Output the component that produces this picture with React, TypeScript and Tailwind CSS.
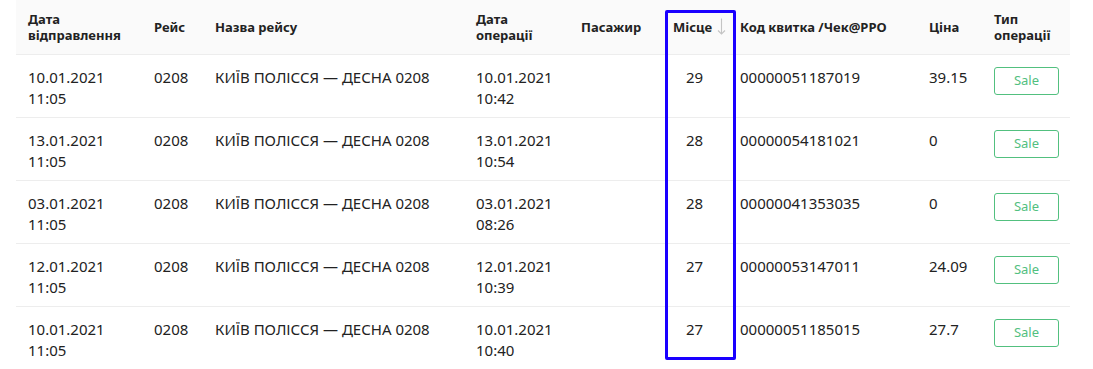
const rows = [
  { dep: ["10.01.2021", "11:05"], op: ["10.01.2021", "10:42"], seat: "29", code: "00000051187019", price: "39.15" },
  { dep: ["13.01.2021", "11:05"], op: ["13.01.2021", "10:54"], seat: "28", code: "00000054181021", price: "0" },
  { dep: ["03.01.2021", "11:05"], op: ["03.01.2021", "08:26"], seat: "28", code: "00000041353035", price: "0" },
  { dep: ["12.01.2021", "11:05"], op: ["12.01.2021", "10:39"], seat: "27", code: "00000053147011", price: "24.09" },
  { dep: ["10.01.2021", "11:05"], op: ["10.01.2021", "10:40"], seat: "27", code: "00000051185015", price: "27.7" },
];

export default function App() {
  return (
    <div className="relative bg-white w-[1093px] h-[369px] overflow-hidden font-['Noto_Sans',sans-serif] text-[15px] text-[#222]">
      <table className="ml-4 w-[1054px] table-fixed border-collapse">
        <colgroup>
          <col className="w-[126px]" />
          <col className="w-[61px]" />
          <col className="w-[261px]" />
          <col className="w-[105px]" />
          <col className="w-[92px]" />
          <col className="w-[67px]" />
          <col className="w-[189px]" />
          <col className="w-[65px]" />
          <col className="w-[88px]" />
        </colgroup>
        <thead>
          <tr className="h-[54px] bg-[#fafafa] border-b border-[#ededed] text-left font-bold text-[13px] leading-[16px]">
            <th className="px-3">Дата<br />відправлення</th>
            <th className="px-3">Рейс</th>
            <th className="px-3">Назва рейсу</th>
            <th className="px-3">Дата<br />операції</th>
            <th className="px-3">Пасажир</th>
            <th className="pl-3 pr-0">
              <div className="flex items-center gap-[5px]">
                <span>Місце</span>
                <svg width="9" height="17" viewBox="0 0 9 17" fill="none" stroke="#c4c4c4" strokeWidth="1.1">
                  <path d="M4.5 0.5V16" />
                  <path d="M1 12.5L4.5 16L8 12.5" />
                </svg>
              </div>
            </th>
            <th className="px-3 whitespace-nowrap">Код квитка /Чек@РРО</th>
            <th className="px-3">Ціна</th>
            <th className="px-3">Тип<br />операції</th>
          </tr>
        </thead>
        <tbody>
          {rows.map((r, i) => (
            <tr key={i} className="h-[63px] border-b border-[#ededed] align-top leading-[21px]">
              <td className="px-3 pt-[12px]">{r.dep[0]}<br />{r.dep[1]}</td>
              <td className="px-3 pt-[12px]">0208</td>
              <td className="px-3 pt-[12px] whitespace-nowrap">КИЇВ ПОЛІССЯ — ДЕСНА 0208</td>
              <td className="px-3 pt-[12px]">{r.op[0]}<br />{r.op[1]}</td>
              <td className="px-3 pt-[12px]"></td>
              <td className="px-3 pt-[12px] text-center">{r.seat}</td>
              <td className="px-3 pt-[12px]">{r.code}</td>
              <td className="px-3 pt-[12px]">{r.price}</td>
              <td className="px-3 pt-[12px]">
                <button className="w-[65px] h-[28px] border border-[#52c07f] rounded-[3px] text-[#52c07f] text-[13px] leading-none bg-white">
                  Sale
                </button>
              </td>
            </tr>
          ))}
        </tbody>
      </table>
      <div className="absolute left-[665px] top-[10px] w-[71px] h-[350px] border-[3px] border-[#1a00ff] rounded-[2px] pointer-events-none" />
    </div>
  );
}
